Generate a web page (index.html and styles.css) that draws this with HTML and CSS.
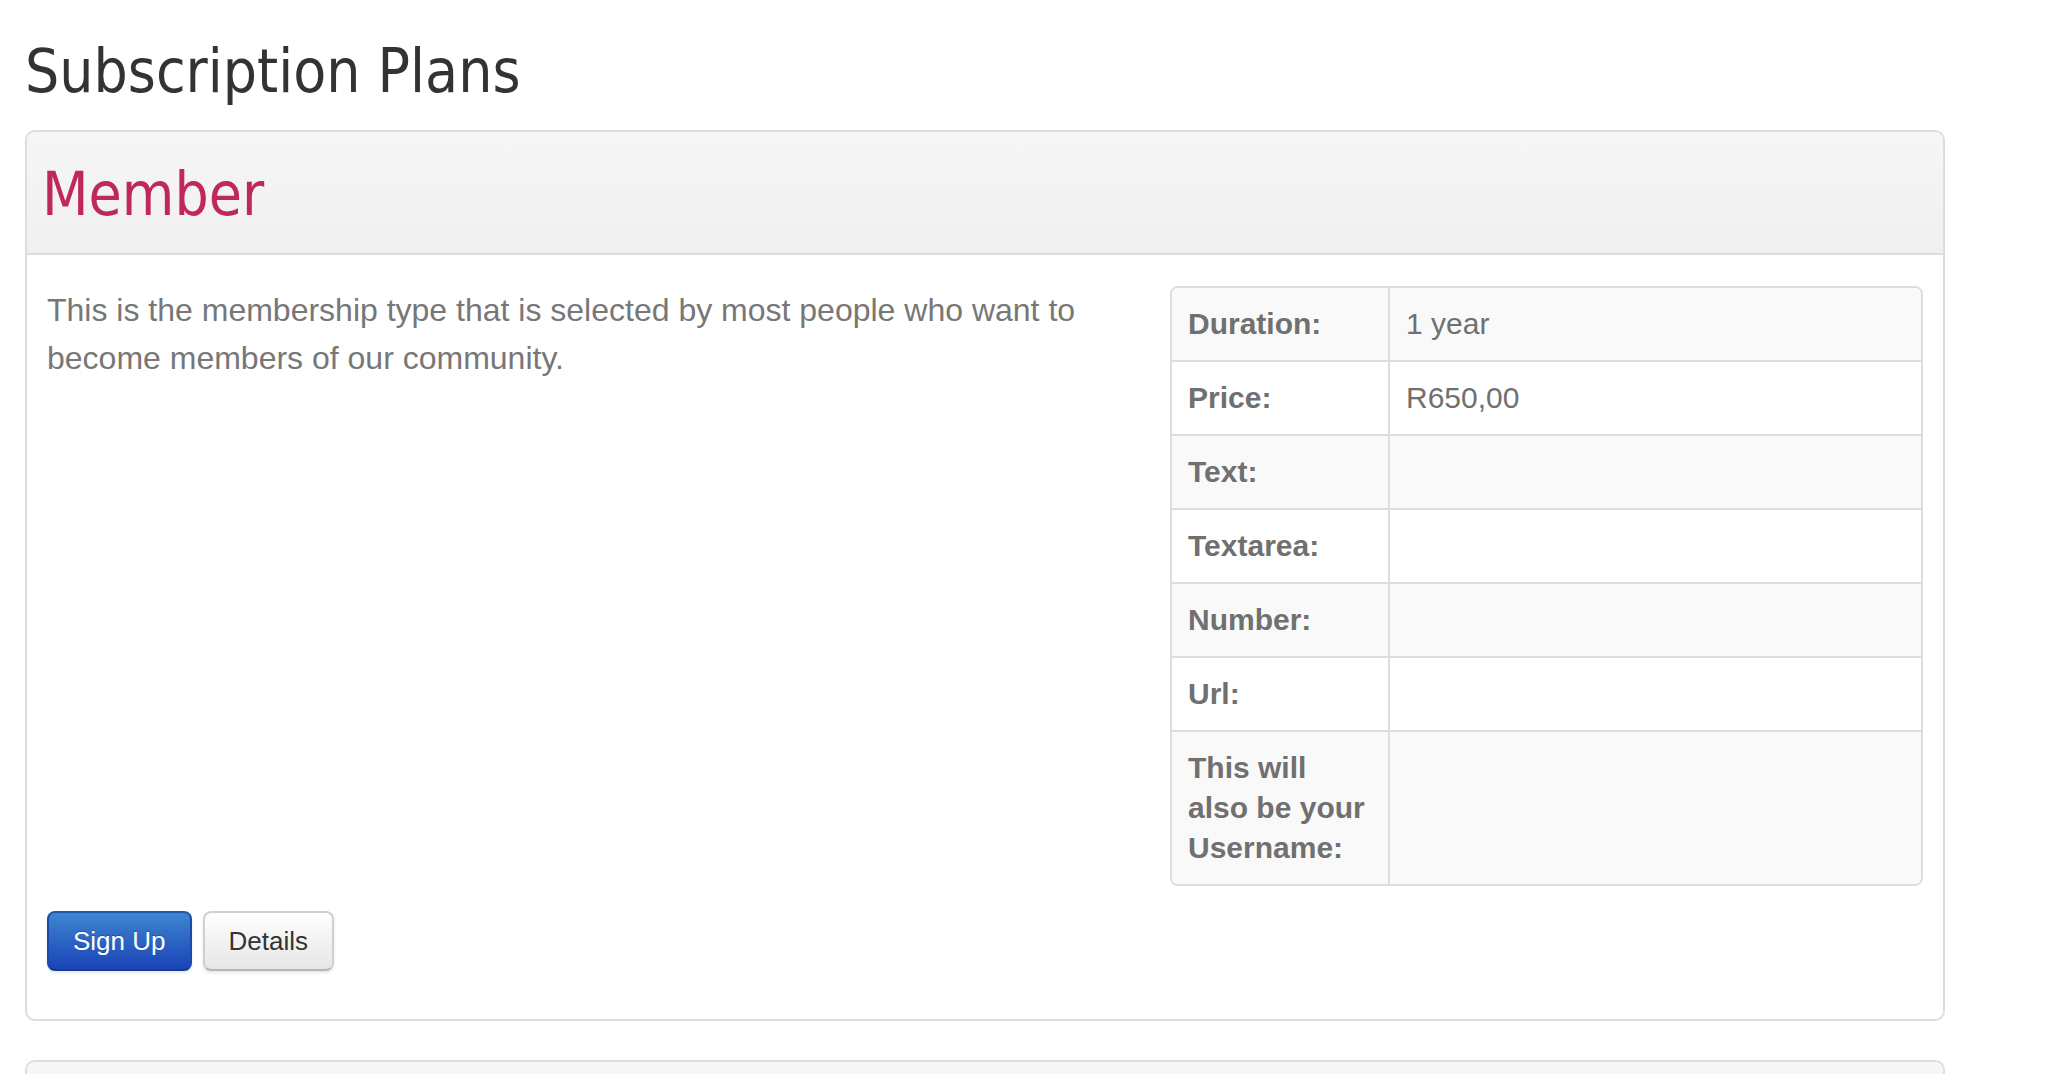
FILE: index.html
```html
<!DOCTYPE html>
<html lang="en">
<head>
    <meta charset="UTF-8">
    <meta name="viewport" content="width=device-width, initial-scale=1.0">
    <title>Subscription Plans</title>

    <link rel="stylesheet" href="styles.css">
</head>
<body>
    <div class="page">
        <h1 class="page-title">Subscription Plans</h1>

        <div class="plan">
            <div class="plan-heading">
                <h2 class="plan-name">Member</h2>
            </div>
            <div class="plan-body">
                <div class="plan-row">
                    <p class="plan-desc">This is the membership type that is selected by most people who want to become members of our community.</p>

                    <table class="plan-table">
                        <tr>
                            <th>Duration:</th>
                            <td>1 year</td>
                        </tr>
                        <tr>
                            <th>Price:</th>
                            <td>R650,00</td>
                        </tr>
                        <tr>
                            <th>Text:</th>
                            <td></td>
                        </tr>
                        <tr>
                            <th>Textarea:</th>
                            <td></td>
                        </tr>
                        <tr>
                            <th>Number:</th>
                            <td></td>
                        </tr>
                        <tr>
                            <th>Url:</th>
                            <td></td>
                        </tr>
                        <tr>
                            <th>This will also be your Username:</th>
                            <td></td>
                        </tr>
                    </table>
                </div>

                <div class="plan-actions">
                    <button class="btn btn-primary">Sign Up</button>
                    <button class="btn">Details</button>
                </div>
            </div>
        </div>

        <div class="plan">
            <div class="plan-heading">
                <h2 class="plan-name">&nbsp;</h2>
            </div>
        </div>
    </div>
</body>
</html>
```

FILE: styles.css
```css
* {
    margin: 0;
    padding: 0;
    box-sizing: border-box;
}

body {
    background: #fff;
    font-family: "Liberation Sans", Arial, sans-serif;
    color: #777;
}

.page {
    width: 1920px;
    margin-left: 25px;
}

.page-title,
.plan-name {
    font-family: "DejaVu Sans Condensed", "DejaVu Sans", sans-serif;
    font-stretch: condensed;
    font-weight: normal;
    font-size: 60px;
    line-height: 80px;
}

.page-title {
    color: #333;
    margin-top: 31px;
    margin-bottom: 19px;
}

.plan {
    border: 2px solid #dddddd;
    border-radius: 10px;
    margin-bottom: 39px;
    overflow: hidden;
}

.plan-heading {
    background: linear-gradient(#f6f6f6, #f0f0f0);
    border-bottom: 2px solid #dddddd;
    padding: 22px 14px 19px 15px;
}

.plan-name {
    color: #bf2858;
}

.plan-body {
    padding: 31px 20px 48px;
}

.plan-row {
    display: grid;
    grid-template-columns: 1fr 753px;
    gap: 45px;
    align-items: start;
}

.plan-desc {
    font-size: 32px;
    line-height: 48px;
    color: #777;
}

.plan-table {
    width: 753px;
    border-collapse: separate;
    border-spacing: 0;
    border: 2px solid #dddddd;
    border-radius: 8px;
    table-layout: fixed;
    font-size: 30px;
    line-height: 40px;
    color: #707070;
}

.plan-table th,
.plan-table td {
    padding: 16px;
    text-align: left;
    vertical-align: top;
    border-top: 2px solid #dddddd;
}

.plan-table th {
    width: 216px;
    font-weight: bold;
}

.plan-table td {
    border-left: 2px solid #dddddd;
}

.plan-table tr:first-child th,
.plan-table tr:first-child td {
    border-top: none;
}

.plan-table tr:nth-child(odd) th,
.plan-table tr:nth-child(odd) td {
    background-color: #f9f9f9;
}

.plan-table tr:first-child th {
    border-top-left-radius: 6px;
}

.plan-table tr:first-child td {
    border-top-right-radius: 6px;
}

.plan-table tr:last-child th {
    border-bottom-left-radius: 6px;
}

.plan-table tr:last-child td {
    border-bottom-right-radius: 6px;
}

.plan-actions {
    display: flex;
    gap: 11px;
    margin-top: 25px;
}

.btn {
    font-family: "Liberation Sans", Arial, sans-serif;
    font-size: 26px;
    line-height: 40px;
    padding: 8px 24px;
    border: 2px solid #d0d0d0;
    border-bottom-color: #b5b5b5;
    border-radius: 8px;
    background: linear-gradient(#ffffff, #e6e6e6);
    color: #333;
    box-shadow: 0 2px 3px rgba(0, 0, 0, 0.1);
    cursor: pointer;
}

.btn-primary {
    background: linear-gradient(#3e86d0, #1a43b7);
    border-color: #2058ad #1c4aa8 #173d92;
    color: #fff;
    text-shadow: 0 -1px 0 rgba(0, 0, 0, 0.25);
}
```
